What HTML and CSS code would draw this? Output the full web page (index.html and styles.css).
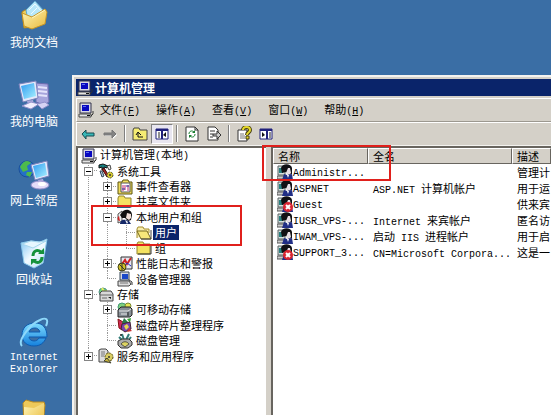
FILE: index.html
```html
<!DOCTYPE html>
<html lang="zh-CN">
<head>
<meta charset="utf-8">
<title>计算机管理</title>
<link rel="stylesheet" href="styles.css">
</head>
<body>
<svg class="defs" aria-hidden="true">
  <defs>
    <linearGradient id="gFolder" x1="0" y1="0" x2="1" y2="1"><stop offset="0" stop-color="#fff6b8"/><stop offset="1" stop-color="#e8b93c"/></linearGradient>
    <linearGradient id="gScreen" x1="0" y1="0" x2="1" y2="1"><stop offset="0" stop-color="#2f9cf0"/><stop offset="1" stop-color="#a8f0ff"/></linearGradient>
    <linearGradient id="gBin" x1="0" y1="0" x2="1" y2="1"><stop offset="0" stop-color="#7cc4f4"/><stop offset=".5" stop-color="#f2faff"/><stop offset="1" stop-color="#b4dcf4"/></linearGradient>
    <linearGradient id="gIe" x1="0" y1="0" x2="0" y2="1"><stop offset="0" stop-color="#7fdcff"/><stop offset="1" stop-color="#1480dc"/></linearGradient>
  </defs>
  <symbol id="pc" viewBox="0 0 16 16">
    <path d="M2 1h11v10H2z" fill="#d8d8e4" stroke="#33334a"/>
    <path d="M4 3h7v6H4z" fill="#0808c0"/><path d="M5 4h3v1H5z" fill="#5a6cf0"/>
    <path d="M1 12h12v3H1z" fill="#e4e4e4" stroke="#444"/><path d="M9 13h3v1H9z" fill="#111"/>
    <path d="M13 14l2-2v-3" fill="none" stroke="#333"/>
  </symbol>
  <symbol id="tools" viewBox="0 0 16 16">
    <path d="M1 2l4-1 5 2-1 2-3-1v3H4V4L1 5z" fill="#178080" stroke="#111"/>
    <path d="M4 6l5 8 2-1-5-8z" fill="#b02020" stroke="#311"/>
    <path d="M9 3l3-1 1 4-2 1z" fill="#eee" stroke="#444"/>
    <path d="M2 8l2 6 2-1-2-5z" fill="#a8c8e0" stroke="#345"/>
    <circle cx="12" cy="12" r="3" fill="#d8cc30" stroke="#553" stroke-dasharray="2 1"/><circle cx="12" cy="12" r="1" fill="#333"/>
  </symbol>
  <symbol id="event" viewBox="0 0 16 16">
    <path d="M1 3h4l1-2h5l1 2h3v12H1z" fill="#f0dc5c" stroke="#5a5210"/>
    <path d="M4 4h9v9H4z" fill="#fff" stroke="#555"/><path d="M6 6v6M8 6v5M11 6v6" stroke="#c02870"/><path d="M9 7h3M5 10h3" stroke="#2030a0"/>
  </symbol>
  <symbol id="folder" viewBox="0 0 16 16">
    <path d="M1 4l1-2h5l1 2h6v10H1z" fill="#f4e262" stroke="#93852c"/><path d="M2 5h11" stroke="#fff9c0"/><path d="M2 14h13V5" fill="none" stroke="#333"/>
  </symbol>
  <symbol id="share" viewBox="0 0 16 16">
    <path d="M1 4l1-2h5l1 2h6v8H1z" fill="#f4e262" stroke="#93852c"/><path d="M0 13h6l3-2 6 3H0z" fill="#286080"/>
  </symbol>
  <symbol id="open" viewBox="0 0 16 16">
    <path d="M1 13V4l1-2h5l1 2h5v4" fill="#f8edaa" stroke="#a38d2d"/><path d="M1 6h10l4 8H5z" fill="#f7e77a" stroke="#776a20"/><path d="M5 14h10V5" fill="none" stroke="#444"/>
  </symbol>
  <symbol id="users" viewBox="0 0 16 16">
    <path d="M1 5l4-3v10l-4 2z" fill="#eee" stroke="#555"/><path d="M2 7c-2 1-2 5 1 5" fill="#c22" />
    <path d="M6 2c5-3 9 0 9 4l-1 5-3 1-3-3-3 0-2-3z" fill="#111"/>
    <path d="M10 4l4 1v4l-2 2-3-2z" fill="#f1dfd8"/><path d="M3 15c0-4 4-5 6-4l3 1 2 3z" fill="#152968"/><path d="M8 11l3 2-1 2z" fill="#fff"/>
  </symbol>
  <symbol id="user" viewBox="0 0 16 16">
    <path d="M1 2h7v9H1z" fill="#d7e0df" stroke="#596262"/><path d="M2 4h4v5H2z" fill="#288181"/><path d="M0 12h8v3H0z" fill="#ccc" stroke="#555"/>
    <path d="M4 4c1-5 10-5 11 0v6l-3 1-3-3-4 1z" fill="#101014"/><path d="M11 4l2 0 1 5-2 2-3-2z" fill="#e7dfe5"/>
    <path d="M5 16l2-6 3 1 5-1 1 6z" fill="#202e86"/><path d="M10 11l1 3 1-3z" fill="#fff"/>
  </symbol>
  <symbol id="userOff" viewBox="0 0 16 16">
    <use href="#user"/><circle cx="11" cy="11" r="5" fill="#d92532"/><path d="M9 9l4 4M13 9l-4 4" stroke="#fff" stroke-width="2"/>
  </symbol>
  <symbol id="perf" viewBox="0 0 16 16">
    <path d="M4 1h11v12H4z" fill="#e6e6f0" stroke="#333"/><path d="M5 8l3-4 2 4 4-6" fill="none" stroke="#d02020" stroke-width="2"/><path d="M7 11l3-4 4 3" fill="none" stroke="#2030c0"/>
    <circle cx="5" cy="11" r="4" fill="#d0c028" stroke="#444310"/><path d="M2 8l6 6M5 7v8" stroke="#333"/>
  </symbol>
  <symbol id="device" viewBox="0 0 16 16">
    <path d="M3 1h9v8H3z" fill="#d4d8e4" stroke="#345"/><path d="M5 3h6v5H5z" fill="#1848c8"/><path d="M1 10h11l2 3-2 2H1z" fill="#ddd" stroke="#444"/><path d="M3 12h8" stroke="#777"/><path d="M12 9l3 2v3" fill="none" stroke="#333"/>
  </symbol>
  <symbol id="storage" viewBox="0 0 16 16">
    <circle cx="5" cy="5" r="4" fill="#6cd07c" stroke="#56938a"/><path d="M4 1l2 4 3-1" fill="none" stroke="#e8f060" stroke-width="2"/>
    <path d="M2 6l2-2h9l2 3v7H2z" fill="#d9d9d9" stroke="#444"/><path d="M2 8h13M4 11h5" stroke="#666"/><path d="M10 10l3 2v-2z" fill="#111"/>
  </symbol>
  <symbol id="removable" viewBox="0 0 16 16">
    <circle cx="5" cy="5" r="4" fill="#7ecf7c" stroke="#497"/><circle cx="11" cy="4" r="3" fill="#e4e454" stroke="#783"/>
    <path d="M1 8l3-3h9l2 2v6l-2 2H1z" fill="#888f96" stroke="#222"/><path d="M2 9h9l3-2M4 12h6" fill="none" stroke="#e8e8e8"/><path d="M11 10v4" stroke="#222"/>
  </symbol>
  <symbol id="defrag" viewBox="0 0 16 16">
    <path d="M1 2l5 3-1 8-3-2z" fill="#d02858" stroke="#811"/><path d="M7 1l4 4-3 6-3-5z" fill="#287c4c"/><path d="M10 2l4-1-1 5z" fill="#38a838"/><path d="M5 7l8-2 1 7-6 3-4-3z" fill="#7844b0" stroke="#423"/><path d="M7 9l3-2 2 3-3 3z" fill="#e8d84c"/><path d="M12 11l3 3-5 1z" fill="#c83434"/>
  </symbol>
  <symbol id="disk" viewBox="0 0 16 16">
    <path d="M5 1l2 6M12 1L9 7M2 4l3 3M14 4l-3 4" stroke="#307c78" stroke-width="2"/><path d="M1 8l4-2h7l3 3v3l-4 3H4l-3-3z" fill="#adadad" stroke="#333"/><path d="M4 11c2-3 6-3 8 0l-4 3z" fill="#ddd462" stroke="#554"/><circle cx="4" cy="2" r="1" fill="#222"/>
  </symbol>
  <symbol id="services" viewBox="0 0 16 16">
    <path d="M1 2l2-1h5l2 2v11H1z" fill="#dcdcdc" stroke="#444"/><path d="M3 4h4M3 6h4M3 8h3" stroke="#777"/><circle cx="11" cy="9" r="4" fill="#d8cc62" stroke="#544b14" stroke-dasharray="2 1"/><circle cx="11" cy="9" r="1" fill="#333"/><path d="M6 13l3-3 4 5z" fill="#c8b43c" stroke="#443"/>
  </symbol>
</svg>

<main class="desktop">
  <nav class="shortcuts" aria-label="桌面">
    <button class="shortcut"><svg viewBox="0 0 32 32"><path d="M4 12l3-2 5 1 2 16-8 1z" fill="#f0cf5c" stroke="#b88818"/><path d="M8 10L17 1l9 10-7 12-9-2z" fill="#b8e8fa" stroke="#63a8cc"/><path d="M11 10l6-6 6 7M13 14l6-6" fill="none" stroke="#eefbff"/><path d="M4 13l10 4 13-8 2 3-2 12-13 5-8-3z" fill="url(#gFolder)" stroke="#c79524"/><path d="M14 18l13-8" stroke="#fff6c0"/></svg><span>我的文档</span></button>
    <button class="shortcut"><svg viewBox="0 0 32 32"><path d="M18 4l12 1 1 18-5 3-8-3z" fill="#a7a5dc" stroke="#6c6cb0"/><path d="M20 8l9 1M20 12l9 1M20 16l9 1" stroke="#e5e4fb" stroke-width="2"/><path d="M1 5l17-3 2 17-15 4z" fill="#e4e8fa" stroke="#7c82bc"/><path d="M3 7l13-3 2 13-12 3z" fill="url(#gScreen)"/><path d="M9 22l6-1 1 4-6 1z" fill="#aaa9db"/><path d="M4 27l9-4 8 2-8 5z" fill="#f0eefd" stroke="#8f8fca"/><path d="M19 25l8-2 4 3-7 4z" fill="#d6d3f4" stroke="#8f8fca"/></svg><span>我的电脑</span></button>
    <button class="shortcut"><svg viewBox="0 0 32 32"><circle cx="9" cy="11" r="8" fill="#2470c8" stroke="#1b509c"/><path d="M2 9c4-7 8-7 11-4l-4 3 1 4-5 2zM9 14l5 0-2 5-4-2z" fill="#4dba4c"/><path d="M13 7l16-4 2 15-14 4z" fill="#e4e9fb" stroke="#7c82bc"/><path d="M15 8l12-3 2 12-11 3z" fill="url(#gScreen)"/><path d="M20 22l5-1 1 4-5 1z" fill="#b6b1e2"/><ellipse cx="22" cy="27" rx="9" ry="4" fill="#e4dcf8" stroke="#928dca"/><ellipse cx="24" cy="26" rx="4" ry="2" fill="#fff"/></svg><span>网上邻居</span></button>
    <button class="shortcut"><svg viewBox="0 0 32 32"><path d="M3 6l10-2 9 1 7-3-4 24-9 5-10-5z" fill="url(#gBin)" stroke="#8bc9eb"/><path d="M4 7l11 4 13-7-7 1-8-1z" fill="#e7f7ff" stroke="#a6d6ed"/><path d="M15 19c0-5 4-7 8-4M24 20c0 5-4 7-8 4" fill="none" stroke="#16923c" stroke-width="3"/><path d="M20 17l6 0v-6zM19 22h-6v6z" fill="#16923c"/></svg><span>回收站</span></button>
    <button class="shortcut"><svg viewBox="0 0 32 32"><path d="M17 7C9 7 4 12 4 19c0 7 5 11 12 11 6 0 10-3 12-8h-7c-1 2-3 3-5 3-3 0-5-2-5-4h18C29 12 25 7 17 7zm-6 9c1-3 3-4 6-4 2 0 4 1 5 4z" fill="url(#gIe)" stroke="#0d5bb0" fill-rule="evenodd"/><path d="M4 30C-1 25 12 8 22 4c6-3 9-1 6 6" fill="none" stroke="#8ed8fa" stroke-width="2"/></svg><span class="latin">Internet<br>Explorer</span></button>
    <button class="shortcut" aria-label="文件夹"><svg viewBox="0 0 32 32"><path d="M5 8l3-3 7 2 11 0 1 3-2 20H6z" fill="#eec95a" stroke="#b88a22"/><path d="M6 12l10 1 10-5v22H6z" fill="url(#gFolder)"/></svg></button>
  </nav>

  <section class="window">
    <header class="titlebar"><svg class="ico"><use href="#pc"/></svg><h1>计算机管理</h1></header>
    <nav class="menubar">
      <svg class="ico"><use href="#pc"/></svg>
      <button>文件<span class="latin">(<u>F</u>)</span></button>
      <button>操作<span class="latin">(<u>A</u>)</span></button>
      <button>查看<span class="latin">(<u>V</u>)</span></button>
      <button>窗口<span class="latin">(<u>W</u>)</span></button>
      <button>帮助<span class="latin">(<u>H</u>)</span></button>
    </nav>
    <div class="toolbar" role="toolbar">
      <button aria-label="后退"><svg class="ico" viewBox="0 0 16 16"><path d="M2 8l4-4v3h8v3H6v3z" fill="#38b8b8" stroke="#174b50"/></svg></button>
      <button aria-label="前进"><svg class="ico" viewBox="0 0 16 16"><path d="M15 9l-4-4v3H3v2h8v3z" fill="#fff"/><path d="M14 8l-4-4v3H2v2h8v3z" fill="#848484" stroke="#777"/></svg></button>
      <i class="divider"></i>
      <button aria-label="向上"><svg class="ico" viewBox="0 0 16 16"><path d="M1 4l1-2h5l1 2h7v10H1z" fill="#f5ec72" stroke="#444"/><path d="M11 11H6V7M4 9l2-3 3 3" fill="none" stroke="#111"/></svg></button>
      <button class="pressed" aria-label="显示/隐藏树"><svg class="ico" viewBox="0 0 16 16"><path d="M2 3h12v10H2z" fill="#fff" stroke="#20207c"/><path d="M2 4h12M8 3v10" stroke="#20207c" stroke-width="2"/><path d="M4 7h2M4 9h2M4 11h2" stroke="#222"/><path d="M12 6v5l-3-2z" fill="#111"/></svg></button>
      <i class="divider"></i>
      <button aria-label="刷新"><svg class="ico" viewBox="0 0 16 16"><path d="M2 1h9l3 3v11H2z" fill="#fff" stroke="#333"/><path d="M11 1v3h3" fill="none" stroke="#333"/><path d="M5 8c0-3 3-4 5-2M11 8c0 3-3 4-5 2" fill="none" stroke="#188030"/><path d="M8 7h3V4zM8 9H5v3z" fill="#188030"/></svg></button>
      <button aria-label="导出列表"><svg class="ico" viewBox="0 0 16 16"><path d="M2 1h7l3 3v10H2z" fill="#fff" stroke="#333"/><path d="M4 5h5M4 8h3M4 11h3" stroke="#333"/><path d="M7 8h4V5l4 4-4 4v-3H7z" fill="#ccc" stroke="#333"/></svg></button>
      <i class="divider"></i>
      <button aria-label="帮助"><svg class="ico" viewBox="0 0 16 16"><path d="M2 4h9v11H2z" fill="#fff" stroke="#333"/><path d="M4 8h4M4 10h5M4 12h5" stroke="#777"/><path d="M7 4c0-4 7-4 7 0 0 3-3 2-3 5" fill="none" stroke="#443d10" stroke-width="4"/><path d="M7 4c0-4 7-4 7 0 0 3-3 2-3 5" fill="none" stroke="#e6da2c" stroke-width="2"/><path d="M10 10h3v3h-3z" fill="#e6da2c" stroke="#443d10"/></svg></button>
      <button aria-label="操作窗格"><svg class="ico" viewBox="0 0 16 16"><path d="M2 3h12v10H2z" fill="#fff" stroke="#20207c"/><path d="M2 4h12M9 3v10" stroke="#20207c" stroke-width="2"/><path d="M11 7h2M11 9h2M11 11h2" stroke="#222"/><path d="M4 6v5l3-2z" fill="#111"/></svg></button>
    </div>

    <div class="panes">
      <div class="treepane">
        <ul class="tree">
          <li class="root"><svg class="ico"><use href="#pc"/></svg><span class="label">计算机管理<span class="latin">(</span>本地<span class="latin">)</span></span></li>
          <li><i class="g tee"><button class="minus" aria-label="折叠"></button></i><svg class="ico"><use href="#tools"/></svg><span class="label">系统工具</span></li>
          <li><i class="g line"></i><i class="g tee"><button class="plus" aria-label="展开"></button></i><svg class="ico"><use href="#event"/></svg><span class="label">事件查看器</span></li>
          <li><i class="g line"></i><i class="g tee"><button class="plus" aria-label="展开"></button></i><svg class="ico"><use href="#share"/></svg><span class="label">共享文件夹</span></li>
          <li><i class="g line"></i><i class="g tee"><button class="minus" aria-label="折叠"></button></i><svg class="ico"><use href="#users"/></svg><span class="label">本地用户和组</span></li>
          <li><i class="g line"></i><i class="g line"></i><i class="g tee"></i><svg class="ico"><use href="#open"/></svg><span class="label selected">用户</span></li>
          <li><i class="g line"></i><i class="g line"></i><i class="g elbow"></i><svg class="ico"><use href="#folder"/></svg><span class="label">组</span></li>
          <li><i class="g line"></i><i class="g tee"><button class="plus" aria-label="展开"></button></i><svg class="ico"><use href="#perf"/></svg><span class="label">性能日志和警报</span></li>
          <li><i class="g line"></i><i class="g elbow"></i><svg class="ico"><use href="#device"/></svg><span class="label">设备管理器</span></li>
          <li><i class="g tee"><button class="minus" aria-label="折叠"></button></i><svg class="ico"><use href="#storage"/></svg><span class="label">存储</span></li>
          <li><i class="g line"></i><i class="g tee"><button class="plus" aria-label="展开"></button></i><svg class="ico"><use href="#removable"/></svg><span class="label">可移动存储</span></li>
          <li><i class="g line"></i><i class="g tee"></i><svg class="ico"><use href="#defrag"/></svg><span class="label">磁盘碎片整理程序</span></li>
          <li><i class="g line"></i><i class="g elbow"></i><svg class="ico"><use href="#disk"/></svg><span class="label">磁盘管理</span></li>
          <li><i class="g elbow"><button class="plus" aria-label="展开"></button></i><svg class="ico"><use href="#services"/></svg><span class="label">服务和应用程序</span></li>
        </ul>
        <div class="mark mark-tree"></div>
      </div>
      <div class="listpane">
        <table>
          <colgroup><col class="c-name"><col class="c-full"><col></colgroup>
          <thead><tr><th>名称</th><th>全名</th><th>描述</th></tr></thead>
          <tbody>
            <tr><td><svg class="ico"><use href="#user"/></svg><span class="latin">Administr...</span></td><td></td><td>管理计</td></tr>
            <tr><td><svg class="ico"><use href="#user"/></svg><span class="latin">ASPNET</span></td><td><span class="latin">ASP.NET </span>计算机帐户</td><td>用于运</td></tr>
            <tr><td><svg class="ico"><use href="#userOff"/></svg><span class="latin">Guest</span></td><td></td><td>供来宾</td></tr>
            <tr><td><svg class="ico"><use href="#user"/></svg><span class="latin">IUSR_VPS-...</span></td><td><span class="latin">Internet </span>来宾帐户</td><td>匿名访</td></tr>
            <tr><td><svg class="ico"><use href="#user"/></svg><span class="latin">IWAM_VPS-...</span></td><td>启动<span class="latin"> IIS </span>进程帐户</td><td>用于启</td></tr>
            <tr><td><svg class="ico"><use href="#userOff"/></svg><span class="latin">SUPPORT_3...</span></td><td><span class="latin">CN=Microsoft Corpora...</span></td><td>这是一</td></tr>
          </tbody>
        </table>
        <div class="mark mark-list"></div>
      </div>
    </div>
  </section>
</main>
</body>
</html>
```
FILE: styles.css
```css
* { box-sizing: border-box; }

body {
  margin: 0;
  height: 100vh;
  padding: 0 3px 3px 0;
  background: #fff;
  color: #000;
  font: 11px/15px "Noto Sans CJK SC", sans-serif;
  overflow: hidden;
}

button {
  margin: 0;
  padding: 0;
  border: 0;
  background: none;
  color: inherit;
  font: inherit;
}

.defs { position: absolute; width: 0; height: 0; }
.ico { display: block; flex: none; width: 16px; height: 16px; }
.latin { font-family: "Liberation Mono", monospace; font-size: 10px; white-space: pre; }

.desktop {
  display: flex;
  height: 100%;
  background: #3a6ea5;
  overflow: hidden;
}

.shortcuts {
  display: grid;
  grid-auto-rows: 79px;
  flex: 0 0 72px;
  padding-right: 4px;
}
.shortcut {
  display: flex;
  flex-direction: column;
  align-items: center;
  gap: 4px;
  color: #fff;
  font-size: 12px;
  line-height: 12px;
}
.shortcut svg { flex: none; width: 32px; height: 32px; }

.window {
  display: flex;
  flex-direction: column;
  flex: 1;
  min-width: 0;
  margin-top: 75px;
  padding: 2px 0 0 2px;
  border-top: 2px solid #f4f3f0;
  border-left: 2px solid #f4f3f0;
  background: #d4d0c8;
}

.titlebar {
  display: flex;
  align-items: center;
  gap: 2px;
  height: 17px;
  padding-left: 1px;
  background: #0a246a;
  color: #fff;
}
.titlebar h1 { margin: 0; font-size: 12px; line-height: 16px; font-weight: 700; }

.menubar {
  display: flex;
  align-items: center;
  gap: 16px;
  height: 23px;
  margin-top: 2px;
  padding-left: 1px;
  border-top: 1px solid #fff;
  border-left: 1px solid #fff;
}
.menubar .ico { margin-right: -10px; }
.menubar button { white-space: nowrap; }

.toolbar {
  display: flex;
  align-items: center;
  height: 24px;
  border-top: 1px solid #9c9890;
  border-left: 1px solid #fff;
  box-shadow: inset 0 1px #fff;
}
.toolbar button { display: grid; place-items: center; width: 22px; height: 20px; }
.toolbar .pressed {
  background: #e8e6f0;
  border: 1px solid;
  border-color: #808080 #fff #fff #808080;
}
.divider { width: 2px; height: 17px; margin: 0 3px; border-left: 1px solid #808080; border-right: 1px solid #fff; }

.panes {
  display: flex;
  flex: 1;
  min-height: 0;
  border-top: 1px solid #f4f3f0;
}
.treepane, .listpane {
  position: relative;
  background: #fff;
  border-top: 2px solid #68655f;
  border-left: 2px solid #68655f;
}
.treepane { flex: 0 0 190px; padding-left: 1px; }
.listpane { flex: 1; min-width: 0; margin-left: 5px; }

.tree {
  display: flex;
  flex-direction: column;
  height: 216px;
  margin: 0;
  padding: 0;
  list-style: none;
}
.tree li { display: flex; align-items: center; flex: 1; min-height: 0; }
.root { padding-left: 2px; }
.label { margin-left: 1px; padding: 0 2px; line-height: 15px; white-space: nowrap; }
.selected { background: #0a246a; color: #fff; }

.g {
  --v: repeating-linear-gradient(#999 0 1px, transparent 1px 2px);
  --h: repeating-linear-gradient(90deg, #999 0 1px, transparent 1px 2px);
  display: grid;
  place-items: center;
  align-self: stretch;
  flex: 0 0 19px;
  background-repeat: no-repeat;
}
.line { background-image: var(--v); background-position: 9px 0; background-size: 1px 100%; }
.tee { background-image: var(--v), var(--h); background-position: 9px 0, 9px 7px; background-size: 1px 100%, 10px 1px; }
.elbow { background-image: var(--v), var(--h); background-position: 9px 0, 9px 7px; background-size: 1px 8px, 10px 1px; }

.minus, .plus {
  width: 9px;
  height: 9px;
  border: 1px solid #848484;
  background: linear-gradient(#000, #000) center / 5px 1px no-repeat #fff;
}
.plus {
  background:
    linear-gradient(#000, #000) center / 5px 1px no-repeat,
    linear-gradient(#000, #000) center / 1px 5px no-repeat #fff;
}

table { width: 100%; table-layout: fixed; border-collapse: separate; border-spacing: 0; }
.c-name { width: 95px; }
.c-full { width: 144px; }
th {
  height: 16px;
  padding: 0 0 0 4px;
  background: #d4d0c8;
  border: 1px solid;
  border-color: #fff #68655f #68655f #fff;
  font-weight: 400;
  line-height: 14px;
  text-align: left;
}
td {
  height: 16px;
  padding: 0 0 0 5px;
  line-height: 14px;
  white-space: nowrap;
}
td:first-child { padding-left: 4px; }
td .ico { float: left; }
td .latin { line-height: 10px; }

.mark { position: absolute; border: 2px solid #e0201c; pointer-events: none; }
.mark-tree { left: 13px; top: 57px; width: 151px; height: 41px; }
.mark-list { left: -11px; top: -3px; width: 129px; height: 36px; }
```
